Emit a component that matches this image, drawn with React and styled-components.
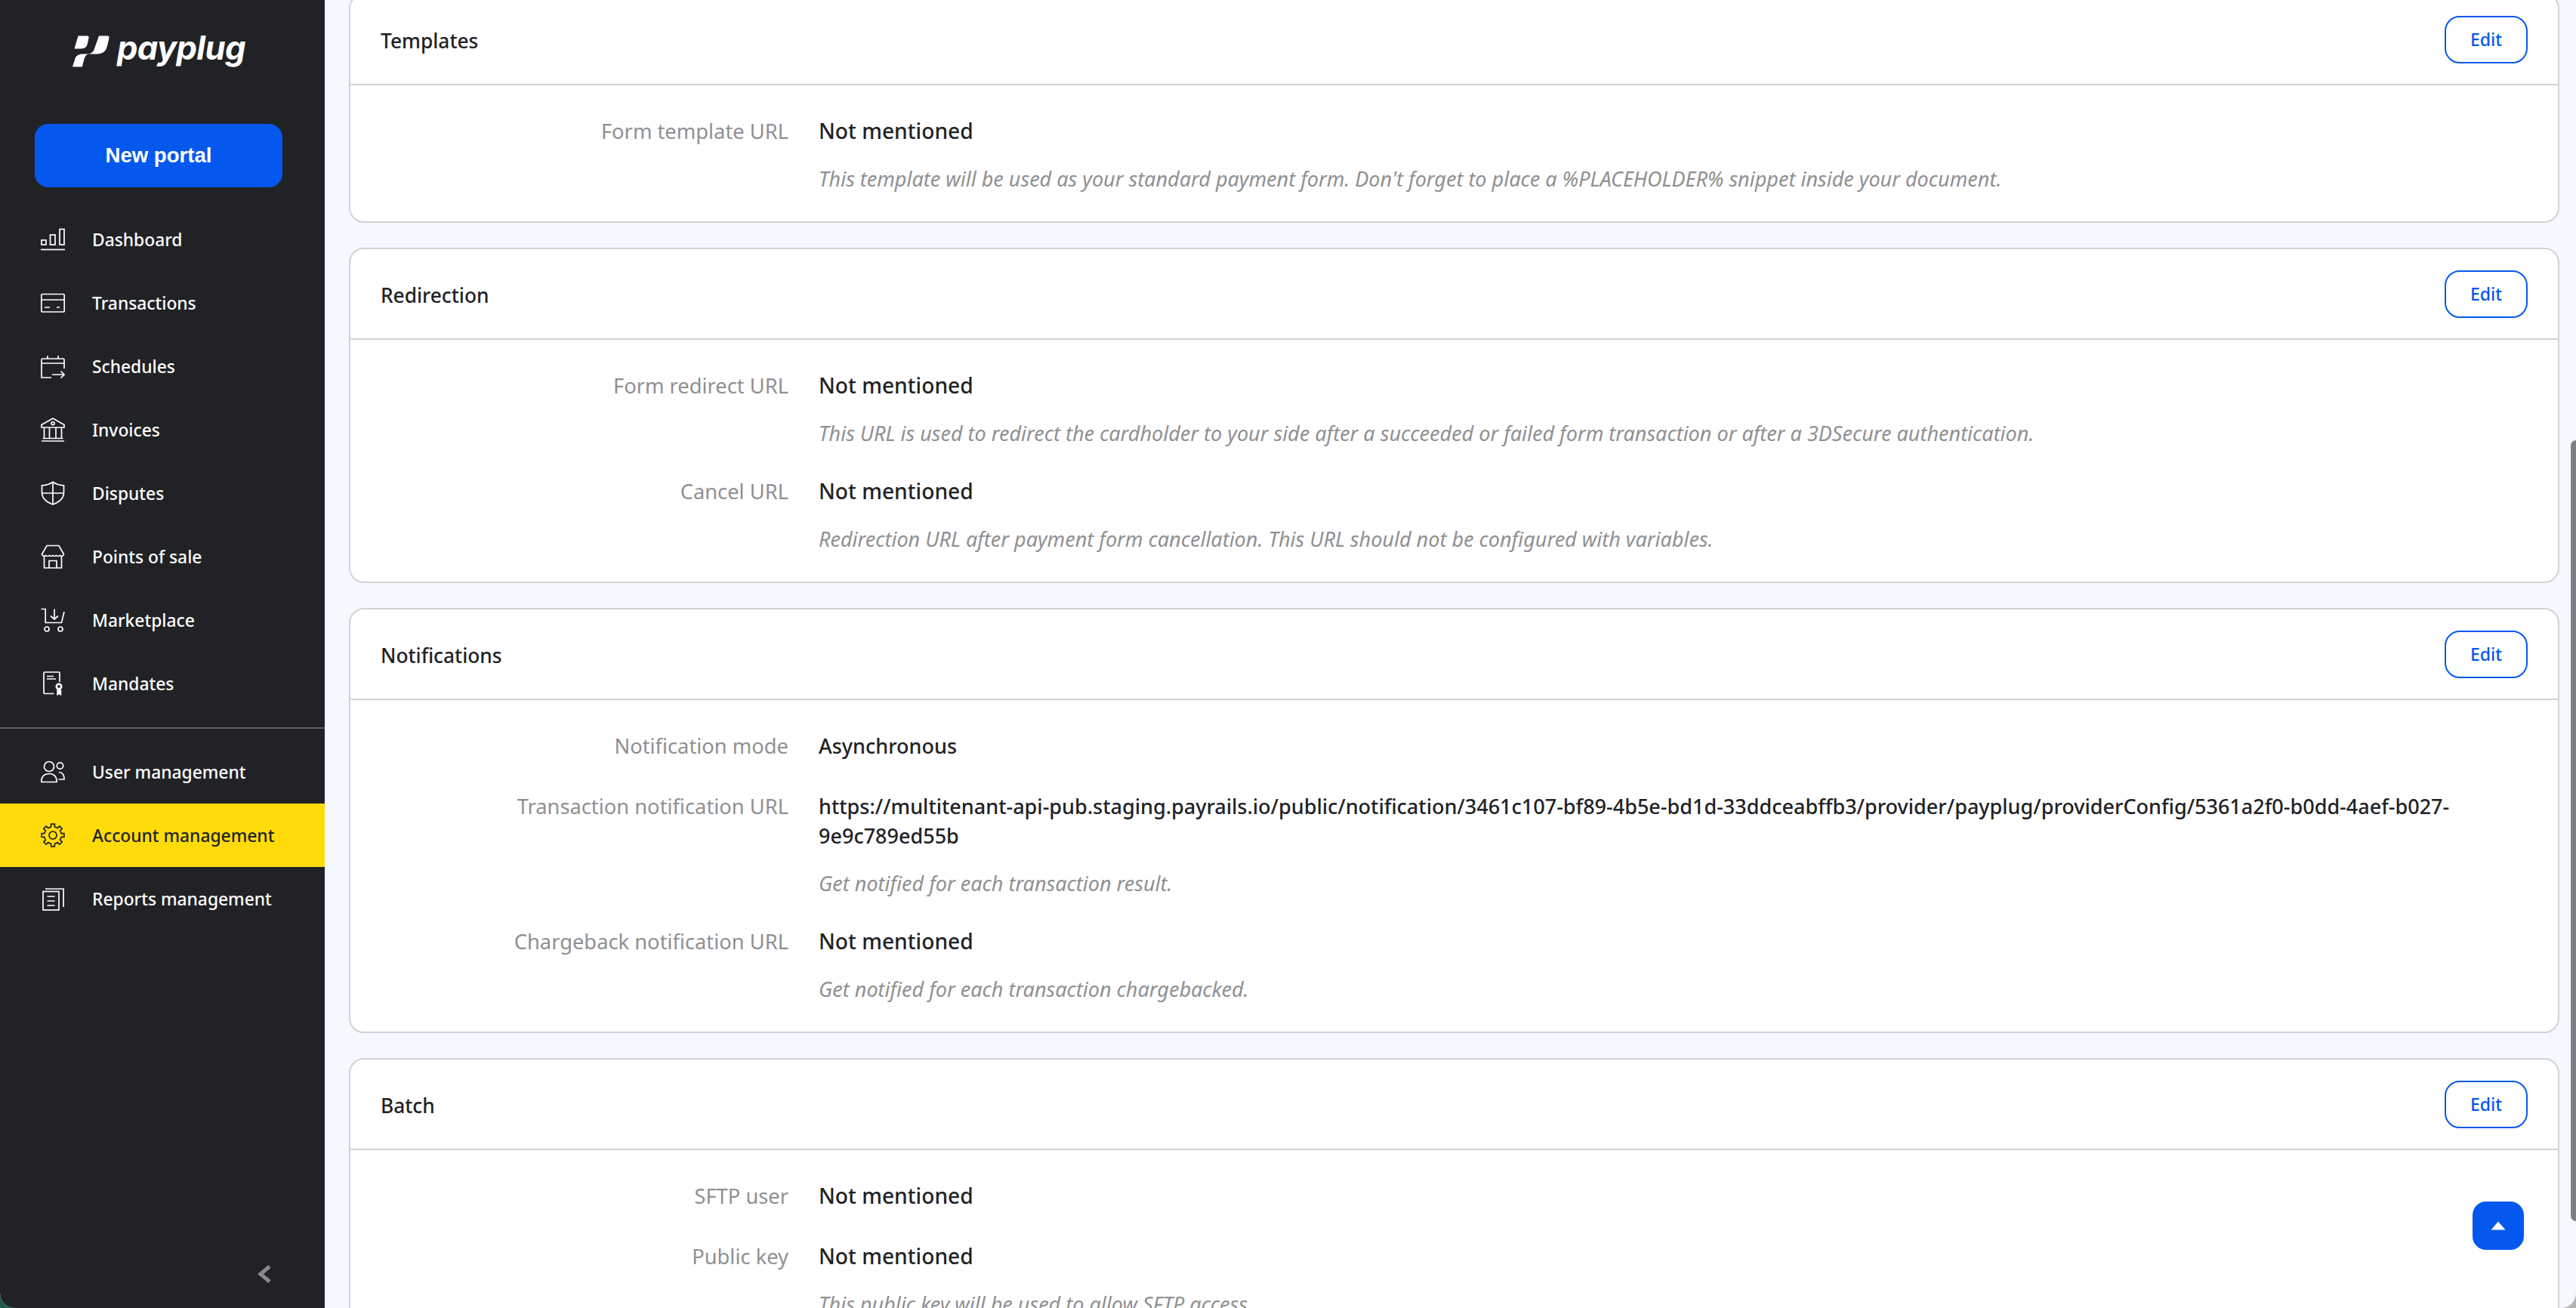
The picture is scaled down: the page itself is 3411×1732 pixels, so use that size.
import React from "react";
import styled, { createGlobalStyle } from "styled-components";

const FONT = `"Noto Sans", "Inter", sans-serif`;

const Global = createGlobalStyle`
  html, body { margin: 0; padding: 0; height: 100%; }
  body {
    font-family: ${FONT};
    background: linear-gradient(to right, #1f5a4a 50%, #b4b4b4 50%);
    overflow: hidden;
  }
  #root { height: 100%; }
  * { box-sizing: border-box; }
`;

const Shell = styled.div`
  position: relative;
  display: flex;
  height: 100vh;
  overflow: hidden;
  border-radius: 0 0 20px 20px;
  background: #f5f8ff;
`;

const Sidebar = styled.aside`
  position: relative;
  flex: 0 0 430px;
  display: flex;
  flex-direction: column;
  background: #212226;
  color: #fff;
`;

const Logo = styled.div`
  display: flex;
  align-items: flex-start;
  height: 164px;
  padding: 47px 0 0 96px;
  gap: 10px;
`;

const LogoMark = styled.svg`
  width: 49px;
  height: 42px;
  flex: none;
`;

const LogoWord = styled.span`
  font-family: "Inter", sans-serif;
  font-style: italic;
  font-weight: 700;
  font-size: 43.5px;
  line-height: 33px;
  letter-spacing: -0.6px;
  color: #fff;
`;

const NewPortal = styled.button`
  margin: 0 56px 27px 46px;
  height: 84px;
  border: 0;
  border-radius: 18px;
  background: #0558ee;
  color: #fff;
  font-family: "Liberation Sans", Arial, sans-serif;
  font-weight: 700;
  font-size: 27.6px;
`;

const Nav = styled.nav`
  display: flex;
  flex-direction: column;
`;

const NavItem = styled.a`
  display: flex;
  align-items: center;
  height: 84px;
  padding-left: 54px;
  gap: 36px;
  font-size: 22.8px;
  font-weight: 500;
  color: ${(p) => (p.$active ? "#212226" : "#fff")};
  background: ${(p) => (p.$active ? "#ffdb0a" : "transparent")};
  svg {
    width: 32px;
    height: 32px;
    flex: none;
    fill: none;
    stroke: currentColor;
    stroke-width: 1.7;
  }
`;

const NavDivider = styled.hr`
  margin: 16px 0 15px;
  height: 2px;
  border: 0;
  background: #5c5d60;
`;

const Collapse = styled.button`
  position: absolute;
  left: 338px;
  bottom: 30px;
  width: 24px;
  height: 30px;
  padding: 0;
  border: 0;
  background: transparent;
  color: #8a8a8c;
  svg { width: 24px; height: 30px; display: block; }
`;

const Main = styled.main`
  flex: 1;
  min-width: 0;
  overflow: hidden;
  padding: 0 22px 0 32px;
`;

const Stack = styled.div`
  display: flex;
  flex-direction: column;
  gap: 33px;
  margin-top: -9px;
`;

const Card = styled.section`
  border: 2px solid #d2d2d4;
  border-radius: 20px;
  background: #fff;
`;

const CardHeader = styled.header`
  display: flex;
  align-items: center;
  justify-content: space-between;
  height: 120px;
  padding: 0 40px;
  border-bottom: 2px solid #d2d2d4;
`;

const CardTitle = styled.h2`
  margin: 3px 0 0;
  font-size: 26.3px;
  font-weight: 500;
  color: #212226;
`;

const EditButton = styled.button`
  width: 110px;
  height: 63px;
  border: 2px solid #0558ee;
  border-radius: 20px;
  background: #fff;
  color: #0558ee;
  font-family: ${FONT};
  font-size: 23px;
  font-weight: 500;
`;

const CardBody = styled.div`
  display: flex;
  flex-direction: column;
  gap: 38px;
  padding: 41px 130px 37px 0;
`;

const Field = styled.div`
  display: grid;
  grid-template-columns: 580px 1fr;
  column-gap: 40px;
  row-gap: 24px;
  line-height: 39px;
  margin-bottom: ${(p) => (p.$bare ? "3px" : "0")};
`;

const FieldLabel = styled.div`
  text-align: right;
  font-size: 27.3px;
  color: #8f9092;
`;

const FieldValue = styled.div`
  color: #212226;
  font-size: ${(p) => (p.$placeholder ? "28.2px" : "27px")};
  font-weight: 500;
  overflow-wrap: anywhere;
`;

const FieldHint = styled.div`
  grid-column: 2;
  font-size: 27px;
  font-style: italic;
  color: #8f9092;
`;

const ScrollTop = styled.button`
  position: absolute;
  left: 3274px;
  top: 1591px;
  width: 68px;
  height: 64px;
  padding: 0;
  border: 0;
  border-radius: 18px;
  background: #0558ee;
  display: flex;
  align-items: center;
  justify-content: center;
  svg { width: 20px; height: 12px; }
`;

const ScrollThumb = styled.div`
  position: absolute;
  right: 0;
  top: 583px;
  width: 7px;
  height: 1034px;
  border-radius: 7px 0 0 7px;
  background: #7f7f83;
`;

const gearPath = (() => {
  const c = 16;
  const teeth = 8;
  const out = [];
  for (let i = 0; i < teeth; i++) {
    const a = (i / teeth) * Math.PI * 2 - Math.PI / 2;
    const step = Math.PI / teeth;
    const pts = [
      [11.4, a - step * 0.98],
      [11.4, a - step * 0.55],
      [15, a - step * 0.4],
      [15, a + step * 0.4],
      [11.4, a + step * 0.55],
    ];
    pts.forEach(([r, t]) => {
      out.push(`${(c + r * Math.cos(t)).toFixed(2)} ${(c + r * Math.sin(t)).toFixed(2)}`);
    });
  }
  return "M" + out.join("L") + "Z";
})();

const Icons = {
  dashboard: (
    <svg viewBox="0 0 32 32">
      <path d="M0 29.5H32" />
      <rect x="1" y="17" width="6" height="6" />
      <rect x="12.5" y="10" width="6.5" height="13" />
      <rect x="25" y="2.5" width="6" height="20.5" />
    </svg>
  ),
  transactions: (
    <svg viewBox="0 0 32 32">
      <rect x="0.8" y="4.5" width="30.4" height="23.5" rx="1.5" />
      <path d="M1 12H31M5 22H12M21 22H25" />
    </svg>
  ),
  schedules: (
    <svg viewBox="0 0 32 32">
      <path d="M31 19V7.5a1.5 1.5 0 0 0-1.5-1.5h-27A1.5 1.5 0 0 0 1 7.5V31h13" />
      <path d="M1 12H31M9 2V6M23 2V6M15 27H31M26.5 22.5 31 27l-4.500 4.500" />
    </svg>
  ),
  invoices: (
    <svg viewBox="0 0 32 32">
      <path d="M1 13V9.500L16 1l15 8.500V13Z" />
      <circle cx="16" cy="7.500" r="2" />
      <path d="M4.500 13V27.500M11.500 13V27.500M20 13V27.500M27.500 13V27.500M2.500 27.500H29.500M1 31H31" />
    </svg>
  ),
  disputes: (
    <svg viewBox="0 0 32 32">
      <path d="M16 1.200C20 4 24.500 5.500 30.500 5.800V15C30.500 23 24 28 16 31 8 28 1.500 23 1.500 15V5.800C7.500 5.500 12 4 16 1.200Z" />
      <path d="M16 1.200V31M1.500 16H30.500" />
    </svg>
  ),
  store: (
    <svg viewBox="0 0 32 32">
      <path d="M8 1.500H24L30.500 13C30 16 26 16 25.500 14 25 16 21 16 20.500 14 20 16 16.500 16 16 14 15.500 16 12 16 11.500 14 11 16 7 16 6.500 14 6 16 2 16 1.500 13Z" />
      <path d="M4.500 16V31H27.500V16M11 31V21.500H21V31" />
    </svg>
  ),
  marketplace: (
    <svg viewBox="0 0 32 32">
      <path d="M0.500 1.500H6.200V19.500H27.500L31 5M18 1.500V15M13 10.500 18 15l5-4.500" />
      <circle cx="8" cy="28" r="3" />
      <circle cx="26" cy="28" r="3" />
    </svg>
  ),
  mandates: (
    <svg viewBox="0 0 32 32">
      <path d="M17.500 29.500H5.500a1.500 1.500 0 0 1-1.500-1.500V2.500A1.500 1.500 0 0 1 5.500 1H23.500a1.500 1.500 0 0 1 1.500 1.500V14" />
      <path d="M8 6.500H17M8 10H20" />
      <circle cx="24" cy="20" r="3.200" strokeWidth="2.600" />
      <path d="M21.500 24.500H27V32L24.200 30 21.500 32Z" fill="currentColor" strokeWidth="0.500" />
    </svg>
  ),
  users: (
    <svg viewBox="0 0 32 32">
      <circle cx="11" cy="9" r="6.500" />
      <path d="M0.800 29.500C0.800 22 5 18.500 11 18.500S21.200 22 21.200 29.500Z" />
      <circle cx="25.500" cy="8" r="4.200" />
      <path d="M24 16.500C28 16.500 31 19 31 26H23.500" />
    </svg>
  ),
  gear: (
    <svg viewBox="0 0 32 32">
      <path d={gearPath} />
      <circle cx="16" cy="16" r="5" />
    </svg>
  ),
  reports: (
    <svg viewBox="0 0 32 32">
      <rect x="3" y="6.500" width="21" height="24.500" />
      <path d="M6 3H30V27M8.500 13H18.500M8.500 19H18.500M8.500 25H18.500" />
    </svg>
  ),
};

const mainNav = [
  ["Dashboard", "dashboard"],
  ["Transactions", "transactions"],
  ["Schedules", "schedules"],
  ["Invoices", "invoices"],
  ["Disputes", "disputes"],
  ["Points of sale", "store"],
  ["Marketplace", "marketplace"],
  ["Mandates", "mandates"],
];
const adminNav = [
  ["User management", "users"],
  ["Account management", "gear", true],
  ["Reports management", "reports"],
];

const NONE = "Not mentioned";

const cards = [
  {
    title: "Templates",
    fields: [
      {
        label: "Form template URL",
        value: NONE,
        hint: "This template will be used as your standard payment form. Don't forget to place a %PLACEHOLDER% snippet inside your document.",
      },
    ],
  },
  {
    title: "Redirection",
    fields: [
      {
        label: "Form redirect URL",
        value: NONE,
        hint: "This URL is used to redirect the cardholder to your side after a succeeded or failed form transaction or after a 3DSecure authentication.",
      },
      {
        label: "Cancel URL",
        value: NONE,
        hint: "Redirection URL after payment form cancellation. This URL should not be configured with variables.",
      },
    ],
  },
  {
    title: "Notifications",
    fields: [
      { label: "Notification mode", value: "Asynchronous" },
      {
        label: "Transaction notification URL",
        value:
          "https://multitenant-api-pub.staging.payrails.io/public/notification/3461c107-bf89-4b5e-bd1d-33ddceabffb3/provider/payplug/providerConfig/5361a2f0-b0dd-4aef-b027-9e9c789ed55b",
        hint: "Get notified for each transaction result.",
      },
      {
        label: "Chargeback notification URL",
        value: NONE,
        hint: "Get notified for each transaction chargebacked.",
      },
    ],
  },
  {
    title: "Batch",
    fields: [
      { label: "SFTP user", value: NONE },
      {
        label: "Public key",
        value: NONE,
        hint: "This public key will be used to allow SFTP access.",
      },
    ],
  },
];

export default function App() {
  return (
    <>
      <Global />
      <Shell>
        <Sidebar>
          <Logo>
            <LogoMark viewBox="0 0 49 42">
              <path
                fill="#fff"
                d="M7.500 0.500H19.500Q22 0.500 21.500 3L19.800 11Q18.500 17.500 11.500 17.500H2.500Z"
              />
              <path
                fill="#fff"
                d="M35 0.500H46.500Q49 0.500 48.500 3L46 14Q43.500 24.500 33 24.500H22Q17.500 24.500 15.500 31L12.800 41.500H0L4 29Q7 24.500 13 24.500H20Q27.500 24.500 29.500 16Z"
              />
            </LogoMark>
            <LogoWord>payplug</LogoWord>
          </Logo>
          <NewPortal>New portal</NewPortal>
          <Nav>
            {mainNav.map(([label, icon]) => (
              <NavItem key={label}>
                {Icons[icon]}
                {label}
              </NavItem>
            ))}
          </Nav>
          <NavDivider />
          <Nav>
            {adminNav.map(([label, icon, active]) => (
              <NavItem key={label} $active={active}>
                {Icons[icon]}
                {label}
              </NavItem>
            ))}
          </Nav>
          <Collapse aria-label="Collapse">
            <svg viewBox="0 0 24 30">
              <path d="M19 5 7 15l12 10" fill="none" stroke="currentColor" strokeWidth="5" />
            </svg>
          </Collapse>
        </Sidebar>
        <Main>
          <Stack>
            {cards.map((card) => (
              <Card key={card.title}>
                <CardHeader>
                  <CardTitle>{card.title}</CardTitle>
                  <EditButton>Edit</EditButton>
                </CardHeader>
                <CardBody>
                  {card.fields.map((f) => (
                    <Field key={f.label} $bare={!f.hint}>
                      <FieldLabel>{f.label}</FieldLabel>
                      <FieldValue $placeholder={f.value === NONE}>{f.value}</FieldValue>
                      {f.hint && <FieldHint>{f.hint}</FieldHint>}
                    </Field>
                  ))}
                </CardBody>
              </Card>
            ))}
          </Stack>
        </Main>
        <ScrollThumb />
        <ScrollTop aria-label="Back to top">
          <svg viewBox="0 0 20 12">
            <path d="M10 0.500 19.500 11.500H0.500Z" fill="#fff" />
          </svg>
        </ScrollTop>
      </Shell>
    </>
  );
}
